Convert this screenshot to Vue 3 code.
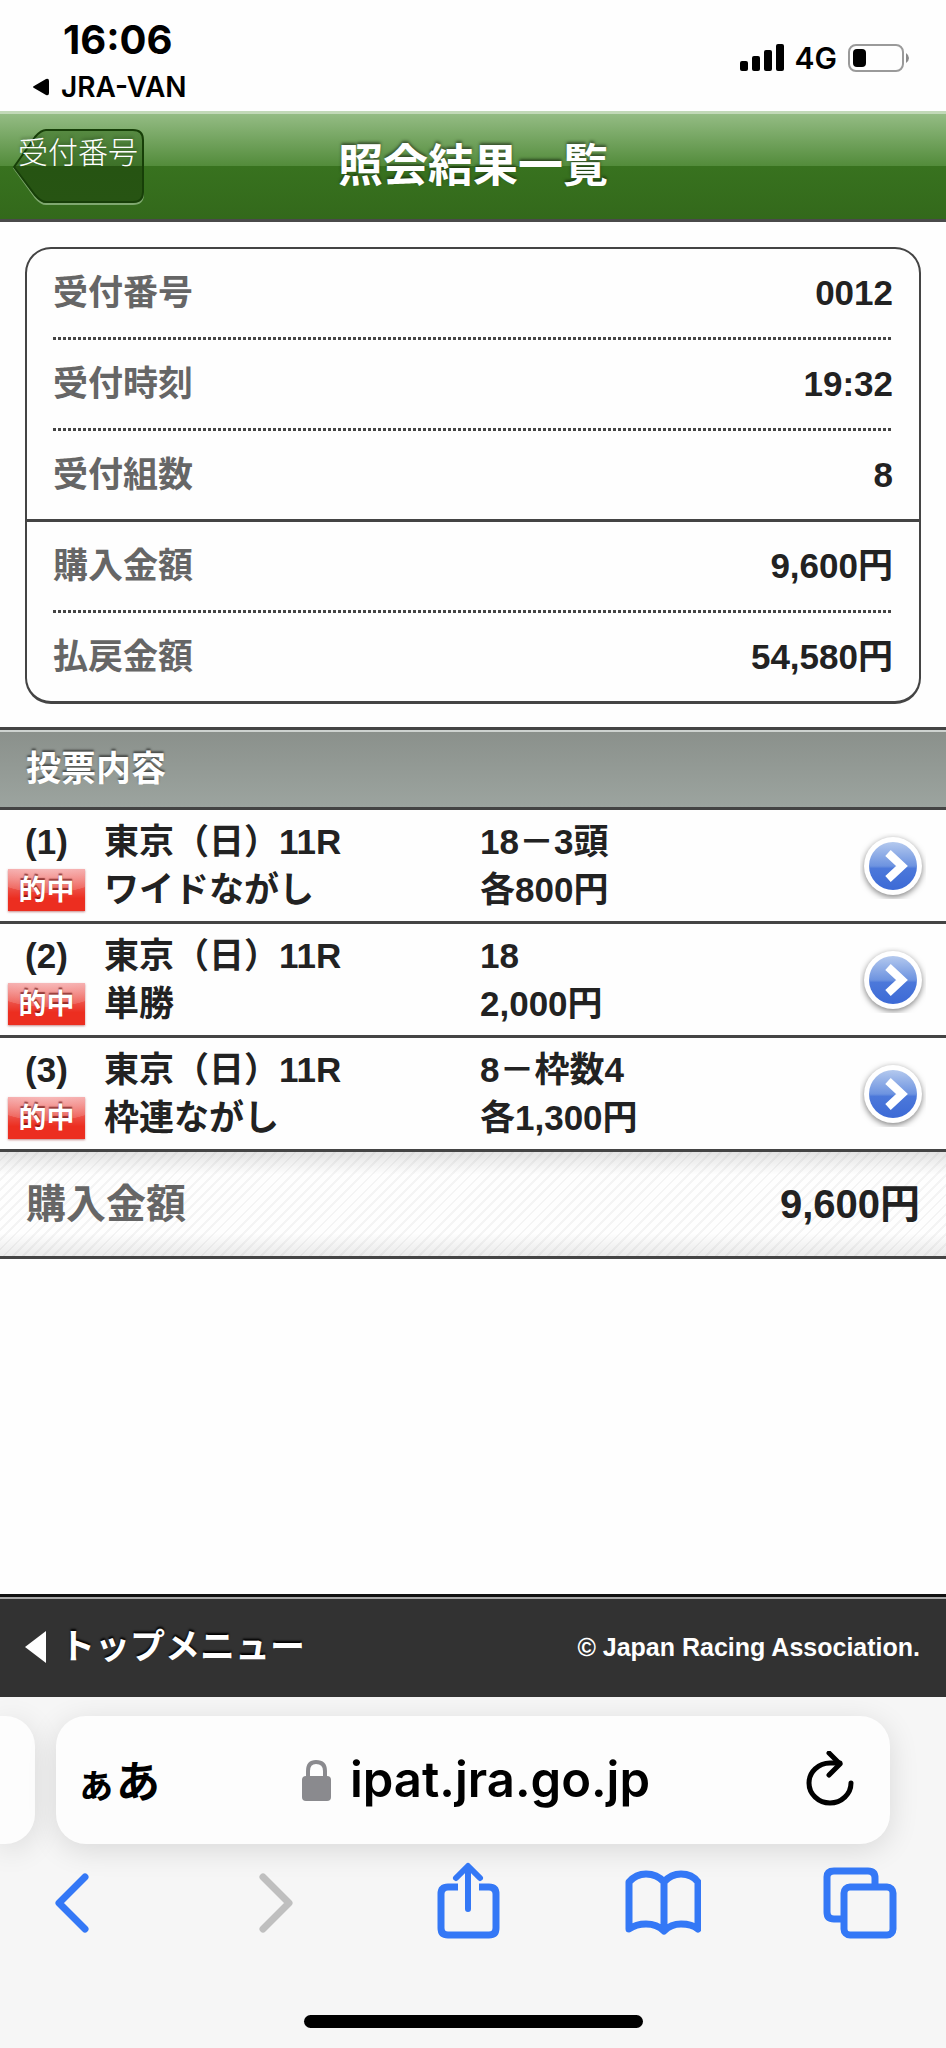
<script setup>
import { ref } from 'vue'

const summary = ref([
  { label: '受付番号', value: '0012', line: 'dotted' },
  { label: '受付時刻', value: '19:32', line: 'dotted' },
  { label: '受付組数', value: '8', line: 'solid' },
  { label: '購入金額', value: '9,600円', line: 'dotted' },
  { label: '払戻金額', value: '54,580円', line: 'none' }
])

const bets = ref([
  { id: 1, race: '東京（日）11R', type: 'ワイドながし', numbers: '18－3頭', amount: '各800円' },
  { id: 2, race: '東京（日）11R', type: '単勝', numbers: '18', amount: '2,000円' },
  { id: 3, race: '東京（日）11R', type: '枠連ながし', numbers: '8－枠数4', amount: '各1,300円' }
])

const total = ref('9,600円')
</script>

<template>
  <div class="screen">
    <div class="status-bar">
      <div class="status-left">
        <div class="clock">16:06</div>
        <a class="back-app" href="#">
          <svg width="18" height="18" viewBox="0 0 18 18">
            <path d="M2 8 L14 1 Q17 0 17 3 V15 Q17 18 14 17 L2 10 Q0 9 2 8 Z" fill="#000" />
          </svg>
          JRA-VAN
        </a>
      </div>
      <div class="status-right">
        <svg width="44" height="28" viewBox="0 0 44 28">
          <rect x="0" y="17" width="8" height="10" rx="2" />
          <rect x="12" y="12" width="8" height="15" rx="2" />
          <rect x="24" y="6" width="8" height="21" rx="2" />
          <rect x="36" y="0" width="8" height="27" rx="2" />
        </svg>
        <span class="network">4G</span>
        <svg width="62" height="28" viewBox="0 0 62 28">
          <rect x="1" y="1" width="54" height="26" rx="7" fill="none" stroke="#9a9a9a" stroke-width="2" />
          <rect x="5" y="5" width="13" height="18" rx="4" />
          <path d="M58 9 Q61 11 61 14 Q61 17 58 19 Z" fill="#8a8a8a" />
        </svg>
      </div>
    </div>

    <header class="header">
      <button class="back-button" type="button">
        <svg class="back-shape" width="132" height="76" viewBox="0 0 132 76">
          <defs>
            <linearGradient id="backFill" x1="0" y1="0" x2="0" y2="1">
              <stop offset="0" stop-color="#578a42" />
              <stop offset="0.5" stop-color="#3d7128" />
              <stop offset="0.5" stop-color="#265412" />
              <stop offset="1" stop-color="#275413" />
            </linearGradient>
          </defs>
          <path d="M1 39 L22 9 Q28 2 33 2 H120 Q130 2 130 12 V65 Q130 75 120 75 H33 Q28 75 22 68 Z" fill="none" stroke="#7fa86f" stroke-width="2" />
          <path d="M1 38 L22 8 Q28 1 33 1 H120 Q130 1 130 11 V63 Q130 73 120 73 H33 Q28 73 22 66 Z" fill="url(#backFill)" stroke="#173f08" stroke-width="2" />
        </svg>
        <span>受付番号</span>
      </button>
      <h1>照会結果一覧</h1>
    </header>

    <main class="content">
      <dl class="summary">
        <div v-for="row in summary" :key="row.label" class="summary-row" :class="row.line">
          <dt>{{ row.label }}</dt>
          <dd>{{ row.value }}</dd>
        </div>
      </dl>

      <h2>投票内容</h2>
      <ul class="bets">
        <li v-for="bet in bets" :key="bet.id">
          <a class="bet" href="#">
            <div class="bet-mark">
              <div>({{ bet.id }})</div>
              <div class="hit">的中</div>
            </div>
            <div class="bet-race">
              <div>{{ bet.race }}</div>
              <div>{{ bet.type }}</div>
            </div>
            <div class="bet-detail">
              <div>{{ bet.numbers }}</div>
              <div>{{ bet.amount }}</div>
            </div>
            <svg class="arrow" width="66" height="66" viewBox="0 0 66 66">
              <defs>
                <linearGradient id="arrowFill" x1="0" y1="0" x2="0" y2="1">
                  <stop offset="0" stop-color="#b4c9ee" />
                  <stop offset="0.5" stop-color="#6d93e0" />
                  <stop offset="0.55" stop-color="#4c78da" />
                  <stop offset="1" stop-color="#3c6ad6" />
                </linearGradient>
              </defs>
              <circle class="ring" cx="33" cy="33" r="29" fill="#fff" />
              <circle cx="33" cy="33" r="24" fill="url(#arrowFill)" />
              <path d="M28 20 L42 33 L28 46" fill="none" stroke="#fff" stroke-width="8" />
            </svg>
          </a>
        </li>
      </ul>
      <div class="total">
        <span class="total-label">購入金額</span>
        <span>{{ total }}</span>
      </div>
    </main>

    <footer class="footer">
      <a class="top-menu" href="#">
        <svg width="21" height="32" viewBox="0 0 21 32">
          <path d="M0 16 L21 0 V32 Z" fill="#fff" />
        </svg>
        トップメニュー
      </a>
      <small>© Japan Racing Association.</small>
    </footer>

    <div class="browser">
      <div class="address-row">
        <div class="next-tab"></div>
        <div class="address-bar">
          <button class="text-size" type="button" aria-label="表示"><span class="small-a">ぁ</span><span>あ</span></button>
          <div class="url">
            <svg width="30" height="42" viewBox="0 0 30 42">
              <rect x="0" y="17" width="29" height="25" rx="4" fill="#8a8a8e" />
              <path d="M6 18 V12 Q6 3 14 3 Q23 3 23 12 V18" fill="none" stroke="#8a8a8e" stroke-width="4" />
            </svg>
            <span>ipat.jra.go.jp</span>
          </div>
          <button class="reload" type="button" aria-label="再読み込み">
            <svg width="48" height="58" viewBox="0 3 48 58">
              <path d="M45 35 A21 20 0 1 1 24 15 H34" fill="none" stroke="#000" stroke-width="5" stroke-linecap="round" />
              <path d="M23 5 L34 16 L23 27" fill="none" stroke="#000" stroke-width="5" stroke-linecap="round" stroke-linejoin="round" />
            </svg>
          </button>
        </div>
      </div>

      <nav class="toolbar">
        <button type="button" aria-label="戻る">
          <svg width="76" height="80" viewBox="0 0 76 80">
            <path d="M51 16 L25 42 L51 68" class="line" />
          </svg>
        </button>
        <button type="button" aria-label="進む" disabled>
          <svg width="76" height="80" viewBox="0 0 76 80">
            <path d="M32 16 L58 42 L32 68" class="line muted" />
          </svg>
        </button>
        <button type="button" aria-label="共有">
          <svg width="76" height="80" viewBox="0 0 76 80">
            <path d="M30 26 H20 Q13 26 13 33 V67 Q13 74 20 74 H61 Q68 74 68 67 V33 Q68 26 61 26 H51" class="line butt" />
            <path d="M40 48 V6 M28 17 L40 5 L52 17" class="line thin" />
          </svg>
        </button>
        <button type="button" aria-label="ブックマーク">
          <svg width="76" height="80" viewBox="0 0 76 80">
            <path d="M39 21 Q32 13 21 13 Q11 13 4 21 V68 Q11 63 21 63 Q32 63 39 70 Q46 63 56 63 Q67 63 73 68 V21 Q67 13 56 13 Q46 13 39 21 V69" class="line" />
          </svg>
        </button>
        <button type="button" aria-label="タブ">
          <svg width="76" height="80" viewBox="0 0 76 80">
            <path d="M19 58 H12 Q5 58 5 51 V16 Q5 10 12 10 H46 Q53 10 53 17 V24" class="line butt" />
            <rect x="22" y="26" width="49" height="48" rx="6" class="line" />
          </svg>
        </button>
      </nav>
      <div class="home-indicator"></div>
    </div>
  </div>
</template>

<style>
body {
  margin: 0;
  background: #fefefe;
}
</style>

<style scoped>
.screen {
  min-height: 100vh;
  display: flex;
  flex-direction: column;
  font-family: "Liberation Sans", "Noto Sans CJK JP", sans-serif;
  font-size: 35px;
  font-weight: bold;
  line-height: 48px;
  color: #222;
}

a {
  color: inherit;
  text-decoration: none;
}

button {
  padding: 0;
  border: 0;
  background: none;
  font: inherit;
  color: inherit;
}

svg {
  display: block;
  flex-shrink: 0;
}

.status-bar {
  height: 111px;
  display: flex;
  justify-content: space-between;
  box-sizing: border-box;
  padding: 16px 36px 0 32px;
  font-family: Inter, sans-serif;
  color: #000;
}

.clock {
  padding-left: 31px;
  font-size: 40px;
}

.back-app {
  display: flex;
  align-items: center;
  gap: 11px;
  font-size: 28px;
  font-weight: 600;
  line-height: 46px;
}

.status-right {
  display: flex;
  align-items: center;
  gap: 11px;
  height: 84px;
}

.network {
  font-size: 30px;
  font-weight: 600;
}

.header {
  display: grid;
  grid-template-columns: 1fr auto 1fr;
  align-items: center;
  height: 105px;
  padding: 0 13px;
  border-top: 3px solid #c2d9b8;
  border-bottom: 3px solid #4a4a4a;
  background: linear-gradient(#94bc84, #528b3a 50%, #38721f 50%, #33691b);
  color: #fff;
}

.back-button {
  position: relative;
  justify-self: start;
  height: 76px;
  padding: 0 6px 28px 5px;
  font-size: 30px;
  font-weight: 300;
  line-height: 48px;
  color: #fff;
}

.back-button span {
  position: relative;
  text-shadow: 0 -2px 3px rgba(0, 0, 0, 0.25);
}

.back-shape {
  position: absolute;
  top: 0;
  left: 0;
}

h1 {
  margin: 0;
  font-size: 45px;
  text-shadow: 0 -2px 3px rgba(0, 0, 0, 0.5);
}

.content {
  flex: 1;
}

.summary {
  margin: 25px 25px 23px;
  border: solid #444;
  border-width: 2px 2px 3px;
  border-radius: 26px;
}

.summary-row {
  display: flex;
  justify-content: space-between;
  align-items: center;
  height: 88px;
  margin: 0 26px;
  padding-bottom: 3px;
}

.summary-row.dotted {
  background: repeating-linear-gradient(90deg, #444 0 3px, transparent 3px 5px) bottom / 100% 3px no-repeat;
}

.summary-row.solid {
  margin: 0;
  padding: 0 26px;
  border-bottom: 3px solid #444;
}

.summary-row.none {
  padding-bottom: 0;
}

dt,
.total-label {
  color: #666;
}

dd {
  margin: 0;
}

h2 {
  margin: 0;
  padding: 15px 26px 14px;
  border-top: 3px solid #444;
  border-bottom: 3px solid #444;
  background: linear-gradient(#8a908b, #9ca49f);
  box-shadow: inset 0 2px #ced3d0;
  font-size: 35px;
  color: #fff;
  text-shadow: 0 -2px 2px rgba(0, 0, 0, 0.5);
}

.bets {
  margin: 0;
  padding: 0;
  list-style: none;
}

.bet {
  display: grid;
  grid-template-columns: 77px 395fr 380fr 66px;
  align-items: center;
  height: 111px;
  padding: 0 20px 0 8px;
  border-bottom: 3px solid #444;
}

.bet-mark {
  display: flex;
  flex-direction: column;
  text-align: center;
}

.hit {
  height: 42px;
  margin: 3px 0;
  background:
    radial-gradient(ellipse 60px 24px at 50% 0, rgba(255, 255, 255, 0.3), rgba(255, 255, 255, 0.15) 98%, transparent),
    linear-gradient(#f49c9c, #ec4a40 50%, #ec2e20 70%);
  box-shadow: 0 1px 2px rgba(160, 60, 60, 0.6);
  font-size: 28px;
  line-height: 44px;
  color: #fff;
  text-shadow: 0 -2px 1px rgba(90, 0, 0, 0.6);
}

.bet-race {
  padding-left: 19px;
}

.ring {
  filter: drop-shadow(0 2px 3px rgba(0, 0, 0, 0.5));
}

.total {
  display: flex;
  justify-content: space-between;
  align-items: center;
  height: 104px;
  padding: 0 26px;
  border-bottom: 3px solid #444;
  background:
    linear-gradient(rgba(0, 0, 0, 0.1), transparent 22%, transparent 78%, rgba(0, 0, 0, 0.08)),
    repeating-linear-gradient(135deg, #fefefe 0 5px, #f4f4f4 5px 7px);
  font-size: 40px;
}

.footer {
  display: flex;
  justify-content: space-between;
  align-items: center;
  height: 100px;
  padding: 0 26px 0 25px;
  border-top: 3px solid #111;
  background: #323232;
  box-shadow: inset 0 2px #a8a8a8;
  color: #fff;
}

.top-menu {
  display: flex;
  align-items: center;
  gap: 14px;
  text-shadow: 0 -2px 2px #000;
}

.footer small {
  font-size: 25px;
}

.browser {
  padding-top: 19px;
  background: #f6f6f6;
  overflow: hidden;
}

.address-row {
  display: flex;
  gap: 21px;
  padding-right: 56px;
}

.next-tab,
.address-bar {
  height: 128px;
  background: #fdfdfd;
  box-shadow: 0 6px 30px rgba(0, 0, 0, 0.12);
}

.next-tab {
  width: 35px;
  border-radius: 0 30px 30px 0;
}

.address-bar {
  flex: 1;
  display: grid;
  grid-template-columns: 88px 1fr 66px;
  align-items: center;
  box-sizing: border-box;
  padding: 0 36px 0 20px;
  border-radius: 30px;
  color: #000;
}

.text-size {
  justify-self: start;
  font-family: "Noto Sans CJK JP", sans-serif;
  font-size: 44px;
}

.small-a {
  font-size: 40px;
}

.url {
  display: flex;
  justify-content: center;
  align-items: center;
  gap: 18px;
  font-family: Inter, sans-serif;
  font-size: 49px;
  font-weight: 600;
}

.reload {
  justify-self: end;
}

.toolbar {
  display: flex;
  justify-content: space-between;
  padding: 17px 48px 0 34px;
}

.line {
  fill: none;
  stroke: #3478f6;
  stroke-width: 7;
  stroke-linecap: round;
  stroke-linejoin: round;
}

.line.butt {
  stroke-linecap: butt;
}

.line.thin {
  stroke-width: 6;
}

.line.muted {
  stroke: #bfbfbf;
}

.home-indicator {
  width: 339px;
  height: 13px;
  margin: 74px auto 20px;
  border-radius: 7px;
  background: #000;
}
</style>
